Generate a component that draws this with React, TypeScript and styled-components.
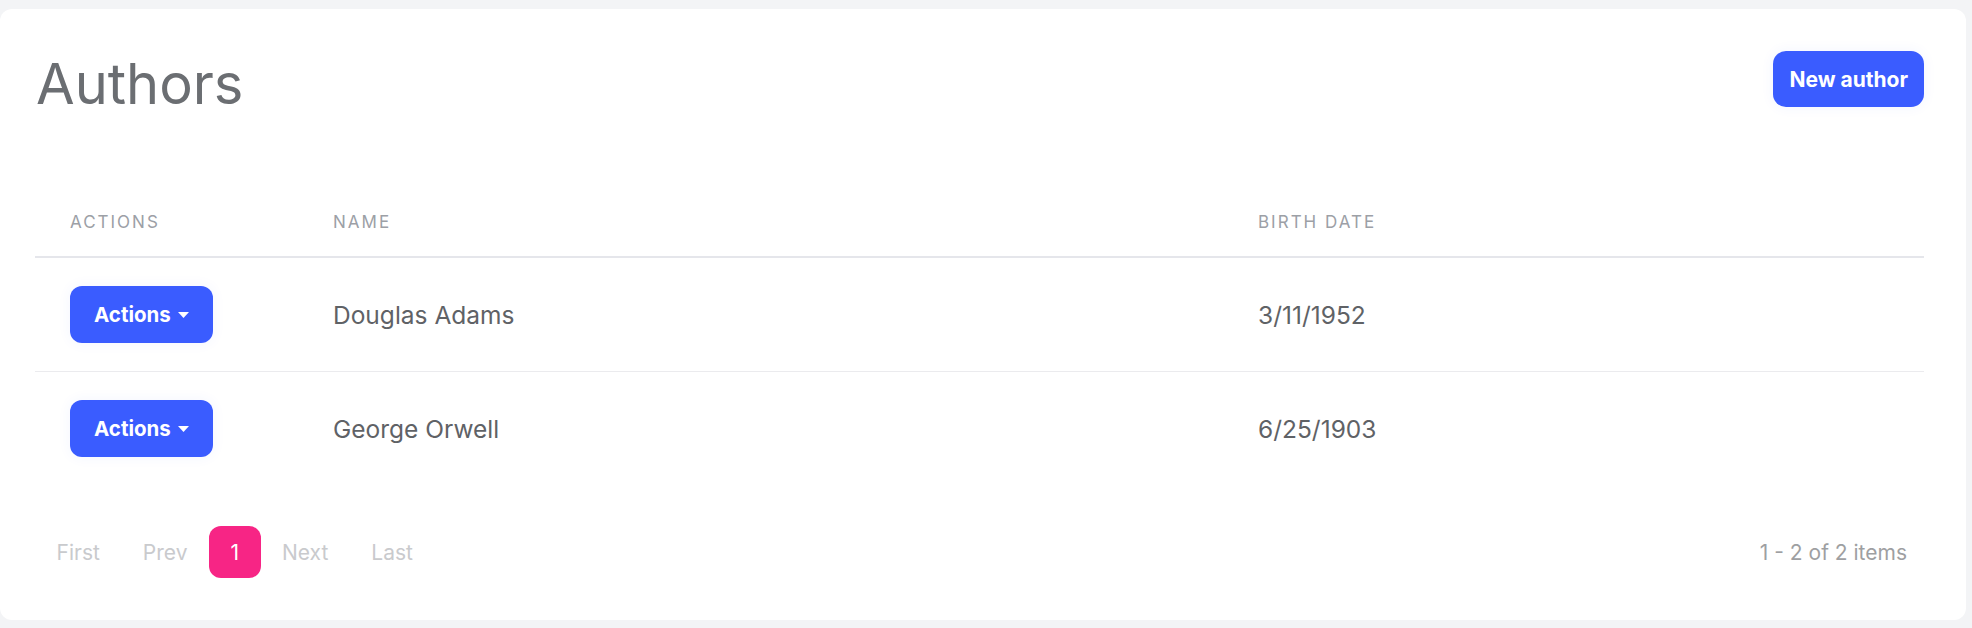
import React from "react";
import styled, { createGlobalStyle } from "styled-components";

const GlobalStyle = createGlobalStyle`
  html, body {
    margin: 0;
    padding: 0;
    background: #f3f4f6;
    font-family: Inter, "Noto Sans", "Liberation Sans", sans-serif;
  }
  * { box-sizing: border-box; }
`;

const Page = styled.div`
  padding: 9px 6px 8px 0;
`;

const Card = styled.section`
  background: #ffffff;
  border-radius: 12px;
  padding: 42px 42px 42px 35px;
`;

const TopBar = styled.header`
  display: flex;
  justify-content: space-between;
  align-items: flex-start;
`;

const Title = styled.h1`
  margin: 5px 0 0 1px;
  font-size: 56px;
  line-height: 56px;
  font-weight: 400;
  color: #6b6e72;
  letter-spacing: 0;
`;

const PrimaryButton = styled.button`
  height: 56px;
  padding: 0 16px;
  border: none;
  border-radius: 13px;
  background: #3a5cff;
  color: #ffffff;
  font-family: inherit;
  font-size: 21px;
  font-weight: 700;
  box-shadow: 0 0 14px rgba(58, 92, 255, 0.06);
  cursor: pointer;
`;

const Table = styled.div`
  margin-top: 72px;
`;

const Row = styled.div<{ $head?: boolean; $last?: boolean }>`
  display: grid;
  grid-template-columns: 263px 925px 1fr;
  align-items: center;
  border-bottom: ${(p) =>
    p.$head ? "2px solid #e5e6eb" : p.$last ? "none" : "1px solid #ebebee"};
`;

const HeaderCell = styled.div`
  padding: 26px 0 22px 35px;
  font-size: 17px;
  line-height: 24px;
  letter-spacing: 2px;
  text-transform: uppercase;
  color: #9ca0a6;
`;

const Cell = styled.div`
  padding: 28px 0 28px 35px;
  font-size: 24.5px;
  line-height: 32px;
  color: #5f6266;
`;

const ActionsButton = styled.button`
  display: inline-flex;
  align-items: center;
  gap: 7px;
  height: 57px;
  padding: 0 24px;
  border: none;
  border-radius: 12px;
  background: #3a5cff;
  color: #ffffff;
  font-family: inherit;
  font-size: 20.5px;
  font-weight: 700;
  box-shadow: 0 0 14px rgba(58, 92, 255, 0.06);
  vertical-align: middle;
  cursor: pointer;
`;

const Footer = styled.footer`
  display: flex;
  justify-content: space-between;
  align-items: center;
  margin-top: 41px;
`;

const Pager = styled.nav`
  display: flex;
  align-items: center;
`;

const PageButton = styled.button<{ $active?: boolean }>`
  height: 52px;
  padding: 0 21.5px;
  border: none;
  border-radius: 12px;
  background: ${(p) => (p.$active ? "#f72585" : "transparent")};
  color: ${(p) => (p.$active ? "#ffffff" : "#c9cacd")};
  font-family: inherit;
  font-size: 21px;
  font-weight: 400;
  cursor: pointer;
`;

const Summary = styled.div`
  padding-right: 17px;
  font-size: 21px;
  color: #9e9fa2;
`;

const Caret = () => (
  <svg width="11" height="6" viewBox="0 0 11 6" aria-hidden="true">
    <polygon points="0,0 11,0 5.5,6" fill="#ffffff" />
  </svg>
);

const authors = [
  { name: "Douglas Adams", birth: "3/11/1952" },
  { name: "George Orwell", birth: "6/25/1903" },
];

export default function App() {
  return (
    <>
      <GlobalStyle />
      <Page>
        <Card>
          <TopBar>
            <Title>Authors</Title>
            <PrimaryButton>New author</PrimaryButton>
          </TopBar>
          <Table>
            <Row $head>
              <HeaderCell>Actions</HeaderCell>
              <HeaderCell>Name</HeaderCell>
              <HeaderCell>Birth date</HeaderCell>
            </Row>
            {authors.map((a, i) => (
              <Row key={a.name} $last={i === authors.length - 1}>
                <Cell>
                  <ActionsButton>
                    Actions
                    <Caret />
                  </ActionsButton>
                </Cell>
                <Cell>{a.name}</Cell>
                <Cell>{a.birth}</Cell>
              </Row>
            ))}
          </Table>
          <Footer>
            <Pager>
              <PageButton>First</PageButton>
              <PageButton>Prev</PageButton>
              <PageButton $active>1</PageButton>
              <PageButton>Next</PageButton>
              <PageButton>Last</PageButton>
            </Pager>
            <Summary>1 - 2 of 2 items</Summary>
          </Footer>
        </Card>
      </Page>
    </>
  );
}
